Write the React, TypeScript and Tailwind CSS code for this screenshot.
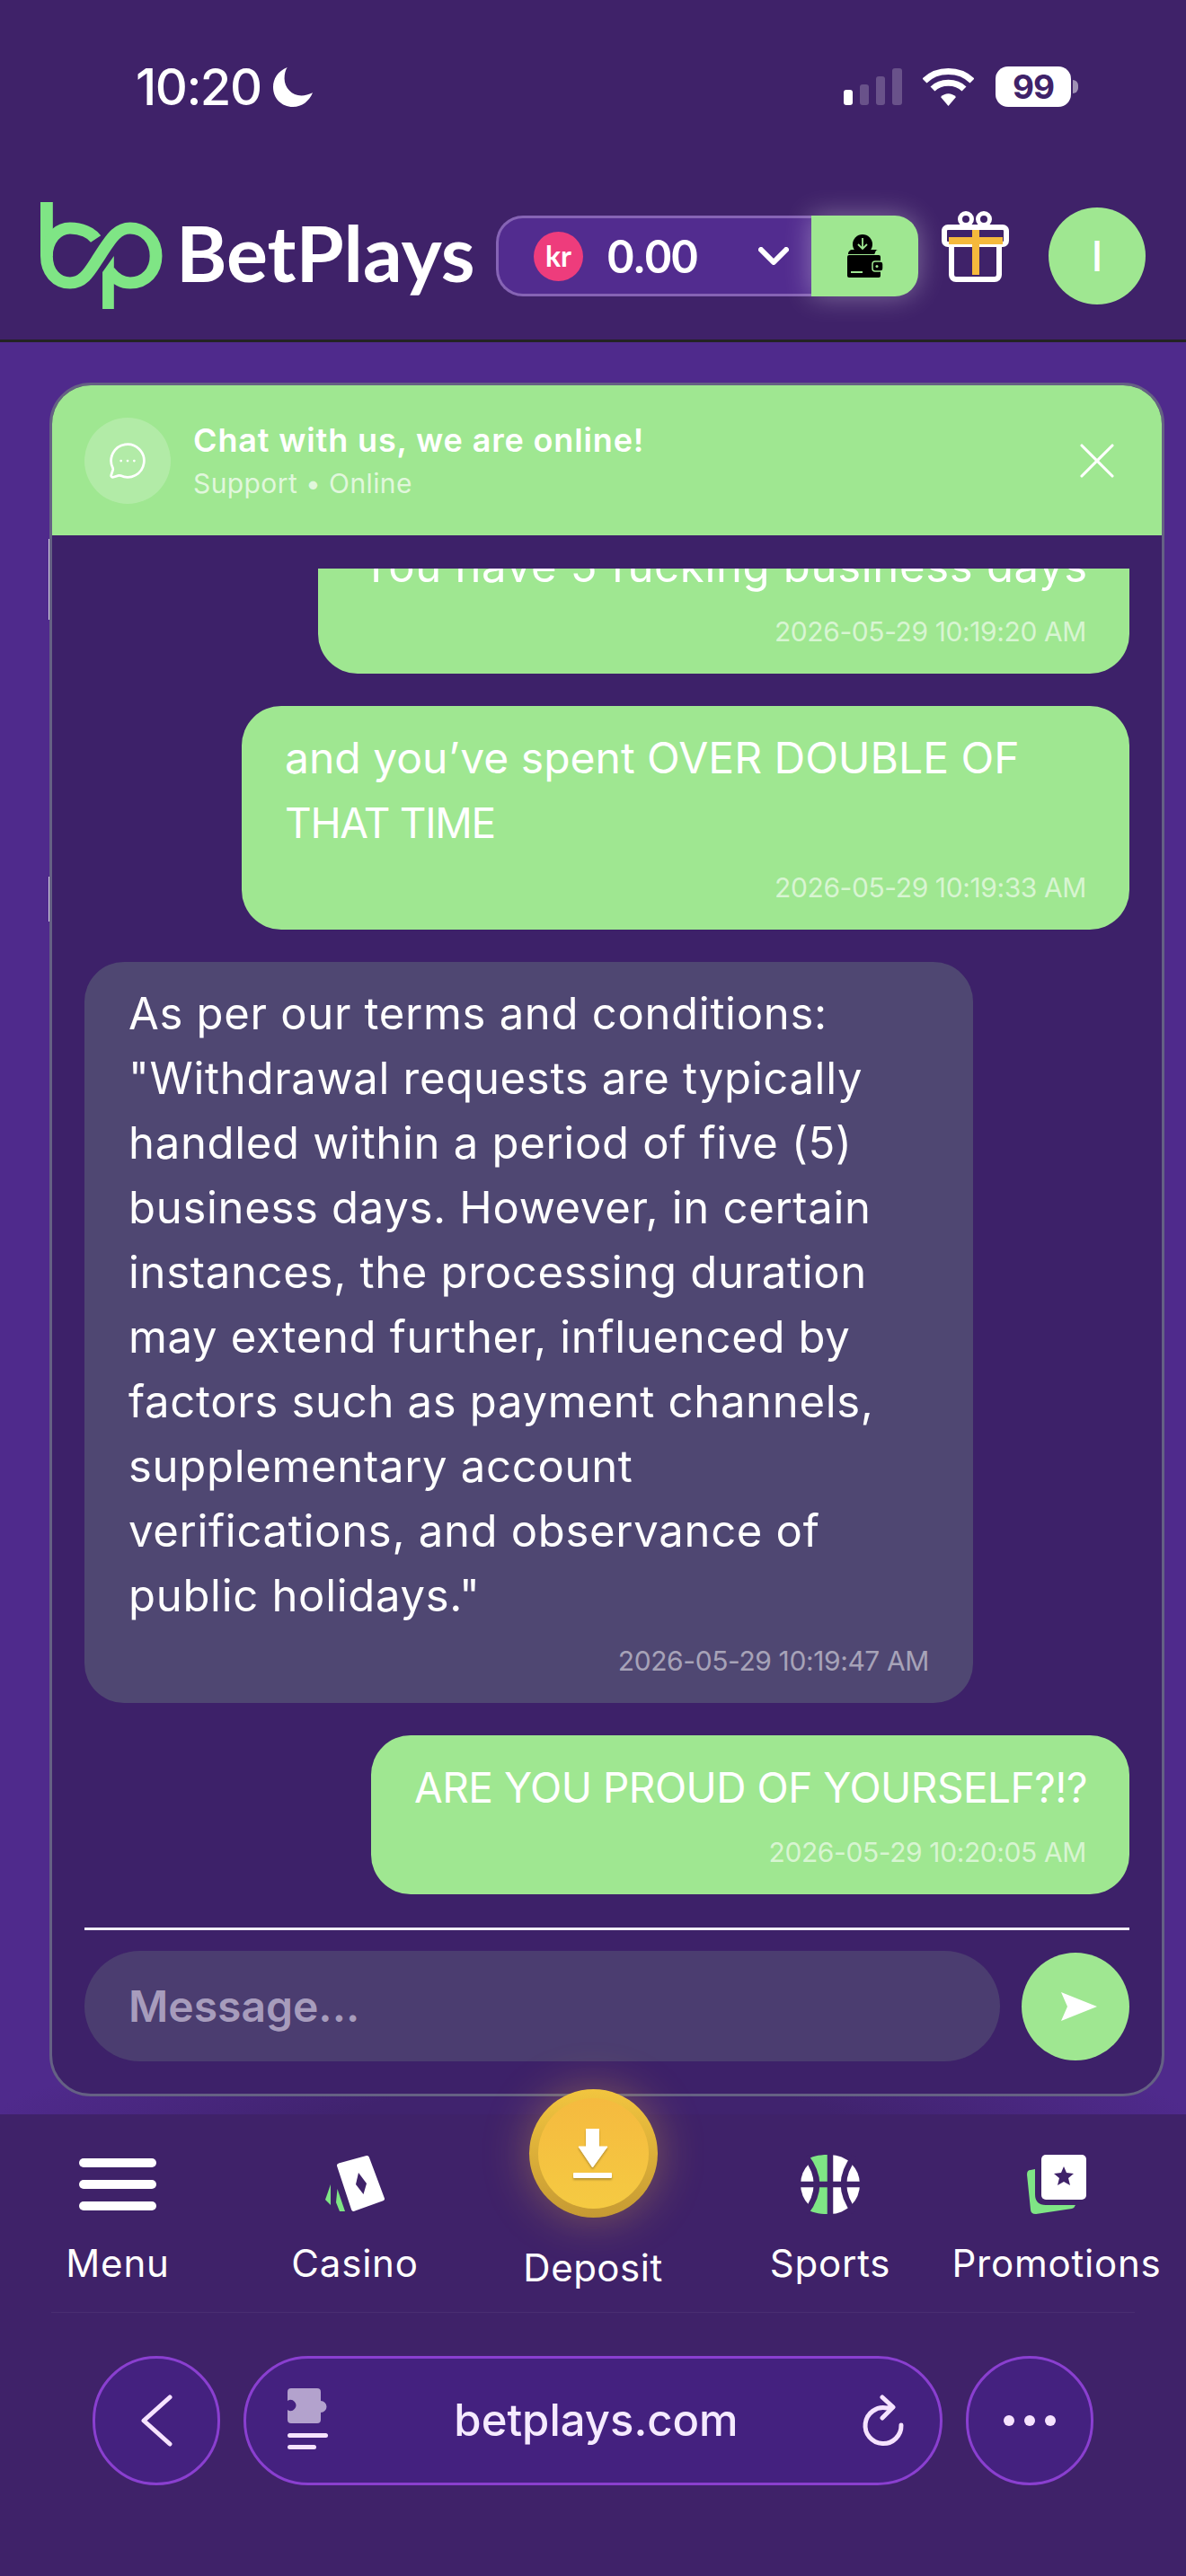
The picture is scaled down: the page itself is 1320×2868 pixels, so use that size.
import React from 'react';
import { MessageCircleMore, X } from 'lucide-react';

const green = 'bg-[#9fe791]';

function StatusBar() {
  return (
    <div className="flex h-[200px] justify-between pl-[151px] pr-[120px] pt-[74px] text-white">
      <div className="flex h-[45px] items-center">
        <span className="font-['Inter',sans-serif] text-[56px] font-medium leading-none tracking-[-1.5px]">10:20</span>
        <svg width="44" height="44" viewBox="0 0 42 42" className="ml-[13px]">
          <path d="M15 0 C5 4 0 12 0 21 C0 33 9 42 21 42 C31 42 38 36 42 27 C38 29 34 30 30 30 C20 30 12 22 12 12 C12 7 13 3 15 0 Z" fill="#fff" />
        </svg>
      </div>
      <div className="flex h-[45px] items-center">
        <svg width="65" height="42" viewBox="0 0 65 42" className="mr-[23px]">
          <rect x="0" y="24" width="10" height="17" rx="3" fill="#fff" />
          <rect x="18" y="18" width="10" height="23" rx="3" fill="#fff" fillOpacity="0.22" />
          <rect x="36" y="9" width="10" height="32" rx="3" fill="#fff" fillOpacity="0.22" />
          <rect x="54" y="0" width="11" height="41" rx="3" fill="#fff" fillOpacity="0.22" />
        </svg>
        <svg width="57" height="42" viewBox="0 0 57 42" className="mr-[24px]" fill="none" stroke="#fff" strokeWidth="7">
          <path d="M2 14 C16 0 41 0 55 14" />
          <path d="M11 23 C20 14 37 14 46 23" />
          <path d="M20 32 L28.5 42 L37 32 C32 27 25 27 20 32 Z" fill="#fff" stroke="none" />
        </svg>
        <div className="flex h-[45px] w-[84px] items-center justify-center rounded-[14px] bg-white font-['Inter',sans-serif] text-[37px] font-bold tracking-[-1px] text-[#3f2269]">
          99
        </div>
        <div className="ml-[2px] h-[15px] w-[6px] rounded-r-full bg-white/50" />
      </div>
    </div>
  );
}

function Logo() {
  return (
    <svg width="136" height="119" viewBox="0 0 128 119" preserveAspectRatio="none" fill="none" stroke="#7fe585" strokeWidth="13">
      <path d="M6.5 0 V60 C6.5 78 17 90 31 90 C46 90 52 76 62 60 C72 44 79 29 94 29 C110 29 121 43 121 60 C121 77 110 90 94 90 C86 90 78 85 72 77" />
      <path d="M58 41 C53 34 43 29 31 29 C17 29 6.5 43 6.5 60" />
      <path d="M65 78 L77 60 V119 H65 Z" fill="#7fe585" stroke="none" />
    </svg>
  );
}

function WalletIcon() {
  return (
    <svg width="40" height="48" viewBox="0 0 40 48">
      <path d="M1 22 C1 19 3 17 6 17 H34 C31 17 31 22 30 22 H1 Z" fill="#000" />
      <circle cx="17" cy="11" r="11" fill="#000" />
      <path d="M17 4 V16 M12 11 L17 16 L22 11" stroke="#9fe791" strokeWidth="1.8" fill="none" />
      <rect x="0" y="23" width="37" height="25" rx="2" fill="#000" />
      <rect x="28" y="30" width="12" height="11" rx="3" fill="#000" stroke="#9fe791" strokeWidth="1.5" />
      <circle cx="33" cy="35.5" r="1.5" fill="#9fe791" />
      <rect x="4" y="41" width="13" height="2" fill="#9fe791" />
    </svg>
  );
}

function GiftIcon() {
  return (
    <svg width="75" height="79" viewBox="0 0 75 79" fill="none">
      <circle cx="27" cy="9" r="6.5" stroke="#fff" strokeWidth="5" />
      <circle cx="47" cy="9" r="6.5" stroke="#fff" strokeWidth="5" />
      <rect x="11" y="20" width="53" height="56" rx="5" stroke="#fff" strokeWidth="6" />
      <rect x="3" y="18" width="69" height="19" rx="4" stroke="#fff" strokeWidth="6" fill="#3f2269" />
      <rect x="8" y="29" width="60" height="8" fill="#f5b93c" />
      <rect x="34" y="21" width="8" height="50" fill="#f5b93c" />
    </svg>
  );
}

function Header() {
  return (
    <div className="flex h-[181px] items-start border-b-[3px] border-[#232323] pl-[45px] pt-[25px]">
      <Logo />
      <span className="ml-[15px] mt-[6px] font-['Lato',sans-serif] text-[86px] font-bold leading-[100px] tracking-[0px] text-white">BetPlays</span>
      <div className="absolute left-[552px] top-[240px] flex h-[90px] w-[470px]">
        <div className="flex h-full w-[351px] items-center rounded-l-[30px] border-[3px] border-r-0 border-[#8664b5] bg-[#522c8f] pl-[39px]">
          <div className="flex h-[55px] w-[55px] items-center justify-center rounded-full bg-[#ee3c7c] font-['Lato',sans-serif] text-[32px] font-bold text-white">kr</div>
          <span className="ml-[27px] font-['Lato',sans-serif] text-[51px] font-bold text-white">0.00</span>
          <svg width="34" height="20" viewBox="0 0 34 20" fill="none" stroke="#fff" strokeWidth="6" strokeLinecap="round" strokeLinejoin="round" className="ml-[67px]">
            <path d="M3 3 L17 17 L31 3" />
          </svg>
        </div>
        <div className={`relative flex h-full w-[119px] items-center justify-center rounded-r-[26px] ${green} shadow-[0_0_30px_rgba(255,255,255,0.35)]`}>
          <WalletIcon />
        </div>
      </div>
      <div className="absolute left-[1048px] top-[235px]">
        <GiftIcon />
      </div>
      <div className={`absolute left-[1167px] top-[231px] flex h-[108px] w-[108px] items-center justify-center rounded-full ${green} font-['Inter',sans-serif] text-[46px] font-medium text-white`}>
        I
      </div>
    </div>
  );
}

function Stamp({ children, light }: { children: React.ReactNode; light?: boolean }) {
  return (
    <div className={`mt-[14px] text-right text-[30px] leading-[45px] tracking-[-0.4px] ${light ? 'text-white/60' : 'text-white/50'}`}>
      {children}
    </div>
  );
}

// Inter's capitals run wider than the reference font, so each line carries its own size
function Mine({ width, lines, time }: { width: string; lines: { text: string; cls: string }[]; time: string }) {
  return (
    <div className={`${width} shrink-0 self-end rounded-[44px] ${green} px-[48px] pb-[24px] pt-[22px] leading-[72px] text-white`}>
      {lines.map((l) => (
        <div key={l.text} className={`whitespace-nowrap ${l.cls}`}>{l.text}</div>
      ))}
      <Stamp light>{time}</Stamp>
    </div>
  );
}

const agentLines = [
  'As per our terms and conditions:',
  '"Withdrawal requests are typically',
  'handled within a period of five (5)',
  'business days. However, in certain',
  'instances, the processing duration',
  'may extend further, influenced by',
  'factors such as payment channels,',
  'supplementary account',
  'verifications, and observance of',
  'public holidays."',
];

function ChatCard() {
  return (
    <div className="relative h-[1908px]">
      {/* thin lit marks on the card's left edge */}
      <div className="absolute -left-px top-[174px] h-[90px] w-px bg-white/80" />
      <div className="absolute -left-px top-[550px] h-[50px] w-px bg-white/80" />
      <div className="flex h-full flex-col overflow-hidden rounded-[46px] border-[3px] border-[#656184] bg-[#3d2169] font-['Inter',sans-serif]">
        <div className={`flex h-[167px] shrink-0 items-center ${green} pl-[36px] pr-[38px] text-white`}>
          <div className="flex h-[96px] w-[96px] items-center justify-center rounded-full bg-white/20">
            <MessageCircleMore size={44} strokeWidth={1.5} />
          </div>
          <div className="ml-[25px] flex-1">
            <div className="text-[36px] font-semibold leading-[48px] tracking-[0.85px]">Chat with us, we are online!</div>
            <div className="mt-[2px] text-[30px] leading-[44px] tracking-[0.4px] text-white/70">Support • Online</div>
          </div>
          <X size={68} strokeWidth={1.1} />
        </div>
        <div className="mx-[36px] mt-[37px] flex min-h-0 flex-1 flex-col justify-end gap-[36px] overflow-hidden">
          <Mine
            width="w-[903px]"
            lines={[{ text: 'You have 5 fucking business days', cls: 'text-[49px] tracking-[0.7px]' }]}
            time="2026-05-29 10:19:20 AM"
          />
          <Mine
            width="w-[988px]"
            lines={[
              { text: 'and you’ve spent OVER DOUBLE OF', cls: 'text-[48px]' },
              { text: 'THAT TIME', cls: 'text-[46px] tracking-[-1.3px]' },
            ]}
            time="2026-05-29 10:19:33 AM"
          />
          <div className="w-[989px] shrink-0 rounded-[44px] bg-[#4f4772] px-[49px] pb-[24px] pt-[22px] text-[49px] leading-[72px] tracking-[0.7px] text-white">
            {agentLines.map((l) => (
              <div key={l} className="whitespace-nowrap">{l}</div>
            ))}
            <Stamp>2026-05-29 10:19:47 AM</Stamp>
          </div>
          <Mine
            width="w-[844px]"
            lines={[{ text: 'ARE YOU PROUD OF YOURSELF?!?', cls: 'text-[46px] tracking-[-0.5px]' }]}
            time="2026-05-29 10:20:05 AM"
          />
        </div>
        <div className="mx-[36px] mt-[37px] h-[3px] shrink-0 bg-[#f1eef6]" />
        <div className="mx-[36px] mb-[36px] mt-[23px] flex shrink-0 items-center gap-[24px]">
          <div className="flex h-[123px] flex-1 items-center rounded-full bg-[#4b3d70] pl-[49px] text-[48px] font-semibold text-[#a79cbc]">
            Message...
          </div>
          <div className={`flex h-[120px] w-[120px] items-center justify-center rounded-full ${green}`}>
            <svg width="40" height="32" viewBox="0 0 40 32" className="ml-[8px]">
              <path d="M0 0 L40 16 L0 32 L7 16 Z" fill="#fff" />
            </svg>
          </div>
        </div>
      </div>
    </div>
  );
}

function CasinoIcon() {
  return (
    <svg width="66" height="66" viewBox="0 0 66 66">
      <path d="M15.5 12 L46.5 3.5 L63.5 49 L31.5 60.5 Z" fill="#fff" stroke="#fff" strokeWidth="5" strokeLinejoin="round" />
      <path d="M37 20 L46 32 L42.5 44 L34 33 Z" fill="#3f2269" />
      <path d="M6 33 L0 50 L6 56 Z" fill="#7fe585" />
      <path d="M13.5 38 L22 63 L16 63 L12 53 Z" fill="#7fe585" />
    </svg>
  );
}

function SportsIcon() {
  return (
    <svg width="66" height="66" viewBox="0 0 66 66">
      <circle cx="33" cy="33" r="33" fill="#fff" />
      <path d="M30 0 C20 0 12 2 6 6 Q27 33 6 60 C12 64 20 66 30 66 Z" fill="#7fe585" />
      <g stroke="#3f2269" strokeWidth="6.5" fill="none">
        <path d="M33 0 V66" />
        <path d="M0 33 H66" />
        <path d="M6 2 Q30 33 6 64" />
        <path d="M60 2 Q36 33 60 64" />
      </g>
    </svg>
  );
}

function PromoIcon() {
  return (
    <svg width="66" height="66" viewBox="0 0 66 66">
      <path d="M9 16 V44 Q9 56 21 56 H54 Q53 59 50 60 L10 66 Q4 66 4 61 L0 22 Q0 17 4 17 Z" fill="#7fe585" />
      <rect x="16" y="0" width="50" height="50" rx="5" fill="#fff" />
      <path d="M41 13 L44 20 L52 21 L46 26 L48 34 L41 30 L34 34 L36 26 L30 21 L38 20 Z" fill="#3f2269" />
    </svg>
  );
}

function MenuIcon() {
  return (
    <div className="flex h-[66px] w-[86px] flex-col justify-center gap-[14px]">
      <div className="h-[10px] rounded-full bg-white" />
      <div className="h-[10px] rounded-full bg-white" />
      <div className="h-[10px] rounded-full bg-white" />
    </div>
  );
}

function NavItem({ width, label, children }: { width: string; label: string; children: React.ReactNode }) {
  return (
    <div className={`flex ${width} flex-col items-center`}>
      <div className="flex h-[66px] items-center justify-center">{children}</div>
      <div className="mt-[25px] whitespace-nowrap text-[42px] leading-[60px] tracking-[0.8px] text-white">{label}</div>
    </div>
  );
}

function BottomNav() {
  return (
    <div className="relative z-10 flex-1 bg-[#3f2269] pt-[45px] font-['Inter',sans-serif]">
      <div className="flex">
        <NavItem width="w-[262px]" label="Menu"><MenuIcon /></NavItem>
        <NavItem width="w-[266px]" label="Casino"><CasinoIcon /></NavItem>
        <div className="relative flex w-[264px] flex-col items-center">
          <div className="absolute -top-[73px] flex h-[143px] w-[143px] items-center justify-center rounded-full bg-gradient-to-b from-[#f2c53f] to-[#c69a33] shadow-[0_0_50px_rgba(245,190,60,0.35)]">
            <div className="flex h-[123px] w-[123px] flex-col items-center justify-center rounded-full bg-gradient-to-b from-[#f5ba3f] to-[#f5ca42]">
              <svg width="44" height="56" viewBox="0 0 44 56" className="drop-shadow-[0_2px_1px_rgba(0,0,0,0.25)]">
                <path d="M14.5 0 H28.5 V20 H38 L21.500 43 L6 20 H14.500 Z" fill="#fff" stroke="#fff" strokeWidth="1" strokeLinejoin="round" />
                <rect x="0" y="49" width="43" height="6" rx="1" fill="#fff" />
              </svg>
            </div>
          </div>
          <div className="h-[66px]" />
          <div className="mt-[30px] text-[42px] leading-[60px] tracking-[0.5px] text-white">Deposit</div>
        </div>
        <NavItem width="w-[264px]" label="Sports"><SportsIcon /></NavItem>
        <NavItem width="w-[240px]" label="Promotions"><PromoIcon /></NavItem>
      </div>
      <div className="mx-[57px] mt-[19px] flex justify-center gap-[26px] border-t border-white/5 pt-[48px]">
        <div className="flex h-[144px] w-[142px] items-center justify-center rounded-full border-[3px] border-[#8a3fd0] bg-[#44217f]">
          <svg width="37" height="58" viewBox="0 0 37 58" fill="none" stroke="#f6e3ff" strokeWidth="5" strokeLinecap="round" strokeLinejoin="round">
            <path d="M33 3 L4 29 L33 55" />
          </svg>
        </div>
        <div className="flex h-[144px] w-[778px] items-center rounded-full border-[3px] border-[#8a3fd0] bg-[#44217f] pl-[46px] pr-[39px]">
          <svg width="48" height="72" viewBox="0 0 48 72">
            <path d="M4 0 H33 Q37 0 37 4 V14 A6.500 6.500 0 1 1 37 27 V35 Q37 39 33 39 H4 Q0 39 0 35 V24 A6 6 0 1 0 0 14 V4 Q0 0 4 0 Z" fill="#b3a2cd" />
            <rect x="0" y="50" width="45" height="5" rx="2.5" fill="#f6e3ff" />
            <rect x="0" y="63" width="32" height="5" rx="2.500" fill="#f6e3ff" />
          </svg>
          <div className="flex-1 text-center text-[49px] font-medium text-[#f5eaff]">betplays.com</div>
          <svg width="48" height="58" viewBox="0 0 48 58" fill="none" stroke="#f6e3ff" strokeWidth="5" strokeLinecap="round" strokeLinejoin="round">
            <path d="M44 34 A20 20 0 1 1 28 15 L34 14" />
            <path d="M23 3 L35 14 L23 26" />
          </svg>
        </div>
        <div className="flex h-[144px] w-[142px] items-center justify-center gap-[11px] rounded-full border-[3px] border-[#8a3fd0] bg-[#44217f]">
          <div className="h-[12px] w-[12px] rounded-full bg-[#f6e3ff]" />
          <div className="h-[12px] w-[12px] rounded-full bg-[#f6e3ff]" />
          <div className="h-[12px] w-[12px] rounded-full bg-[#f6e3ff]" />
        </div>
      </div>
    </div>
  );
}

export default function App() {
  return (
    <div className="relative flex h-[2868px] w-[1320px] flex-col overflow-hidden bg-[#3f2269]">
      <StatusBar />
      <Header />
      <div className="h-[1973px] shrink-0 bg-[radial-gradient(ellipse_50%_4%_at_50%_100%,#40236e_40%,#4f2a8c_100%)] pl-[55px] pr-[24px] pt-[45px]">
        <ChatCard />
      </div>
      <BottomNav />
    </div>
  );
}
